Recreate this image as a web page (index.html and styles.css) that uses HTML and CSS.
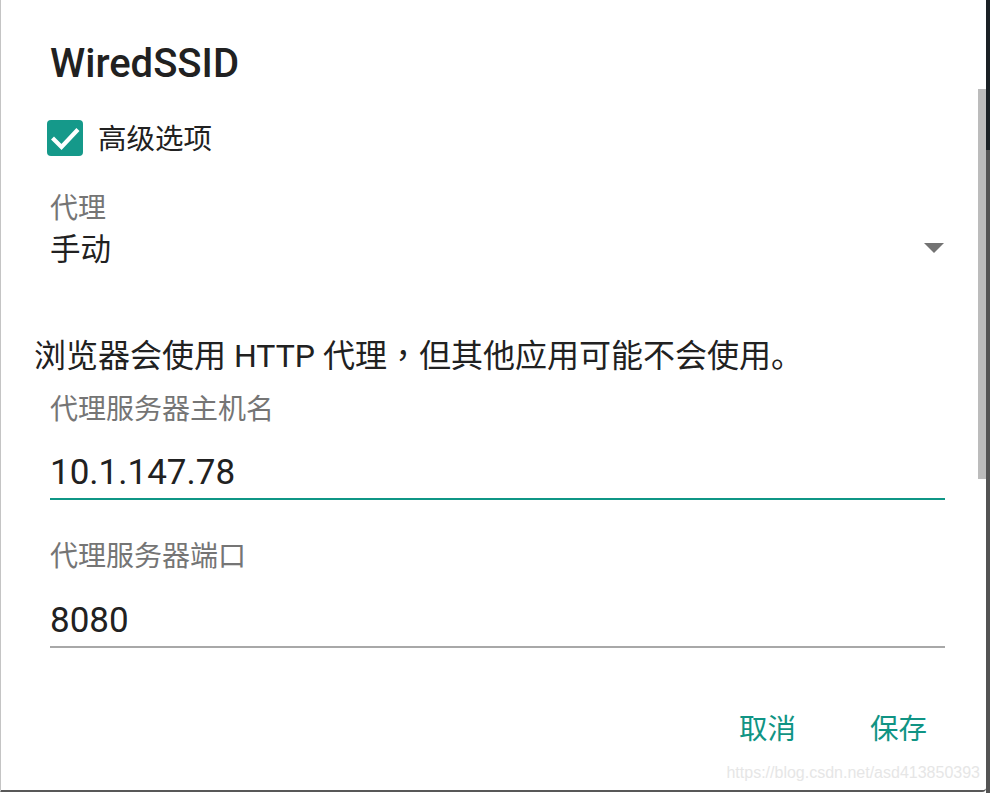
FILE: index.html
```html
<!DOCTYPE html>
<html lang="zh-CN">
<head>
<meta charset="utf-8">
<title>WiredSSID</title>
<link rel="stylesheet" href="styles.css">
</head>
<body>
<div class="frame">
  <div class="dialog">
    <h1 class="title">WiredSSID</h1>
    <div class="check-row">
      <span class="checkbox">
        <svg width="36" height="36" viewBox="0 0 36 36"><path d="M7 19.5 L14.5 27 L29.5 11" fill="none" stroke="#fff" stroke-width="4.2" stroke-linecap="square" stroke-linejoin="miter"/></svg>
      </span>
      <span class="check-text">高级选项</span>
    </div>
    <div class="field-label first">代理</div>
    <div class="select-row">
      <span class="select-value">手动</span>
      <span class="arrow"></span>
    </div>
    <p class="note">浏览器会使用 HTTP 代理<span class="punct" lang="zh-TW">，</span>但其他应用可能不会使用。</p>
    <div class="field-label host">代理服务器主机名</div>
    <div class="input focused">10.1.147.78</div>
    <div class="field-label port">代理服务器端口</div>
    <div class="input">8080</div>
    <div class="actions">
      <span class="btn">取消</span>
      <span class="btn">保存</span>
    </div>
    <div class="scroll-thumb"></div>
    <div class="watermark">https://blog.csdn.net/asd413850393</div>
  </div>
  <div class="edge"></div>
</div>
</body>
</html>
```
FILE: styles.css
```css
html, body {
  margin: 0;
  padding: 0;
  background: #ffffff;
}
body {
  width: 990px;
  height: 793px;
  overflow: hidden;
  font-family: Roboto, "Noto Sans CJK SC", sans-serif;
  color: #212121;
}
.frame {
  display: flex;
  height: 793px;
}
.dialog {
  flex: 1;
  position: relative;
  box-sizing: border-box;
  height: 792px;
  border-left: 1px solid #c4c4c4;
  border-bottom: 2px solid #585858;
  border-bottom-right-radius: 4px;
  padding: 41px 41px 0 49px;
  display: flex;
  flex-direction: column;
  background: #ffffff;
}
.edge {
  width: 4px;
  background: linear-gradient(#1b2125 0, #1b2125 150px, #545454 150px);
}
.title {
  margin: 0;
  font-size: 40px;
  font-weight: 500;
  line-height: 46px;
  height: 46px;
  color: #212121;
}
.check-row {
  margin-top: 33px;
  height: 36px;
  display: flex;
  align-items: center;
  gap: 15px;
  margin-left: -3px;
}
.checkbox {
  width: 36px;
  height: 36px;
  border-radius: 4px;
  background: #15998a;
  display: block;
}
.checkbox svg { display: block; }
.check-text {
  font-size: 28.5px;
  line-height: 40px;
  height: 36px;
  color: #212121;
}
.field-label {
  font-size: 28px;
  line-height: 36px;
  height: 32px;
  color: #757575;
}
.field-label.first { margin-top: 35px; }
.select-row {
  margin-top: 7px;
  height: 36px;
  display: flex;
  align-items: center;
  justify-content: space-between;
}
.select-value {
  font-size: 30.5px;
  line-height: 40px;
  height: 36px;
  color: #212121;
}
.arrow {
  width: 0;
  height: 0;
  border-left: 10px solid transparent;
  border-right: 10px solid transparent;
  border-top: 10px solid #737373;
  margin-right: 1px;
}
.note {
  margin: 68px 0 0 -16px;
  font-size: 32px;
  line-height: 38px;
  height: 36px;
  white-space: nowrap;
  color: #212121;
}
.punct {
  font-family: "Noto Sans CJK TC", sans-serif;
}
.field-label.host { margin-top: 22px; }
.field-label.port { margin-top: 39px; }
.input {
  margin-top: 16px;
  padding: 13px 0 5px;
  font-size: 35px;
  line-height: 40px;
  height: 40px;
  border-bottom: 2px solid #a8a8a8;
  color: #212121;
}
.input.focused {
  border-bottom-color: #0f9686;
}
.field-label.port + .input { margin-top: 17px; }
.actions {
  margin-top: 62px;
  height: 40px;
  display: flex;
  justify-content: flex-end;
  align-items: center;
  gap: 74px;
  padding-right: 18px;
}
.btn {
  font-size: 28.5px;
  line-height: 40px;
  color: #109484;
  font-weight: 400;
}
.scroll-thumb {
  position: absolute;
  right: 0;
  top: 89px;
  width: 8px;
  height: 390px;
  background: #bcbcbc;
}
.watermark {
  position: absolute;
  right: 6px;
  bottom: 8px;
  font-family: "Liberation Sans", Arial, sans-serif;
  font-size: 16px;
  color: #e6e6e6;
  white-space: nowrap;
}
```
